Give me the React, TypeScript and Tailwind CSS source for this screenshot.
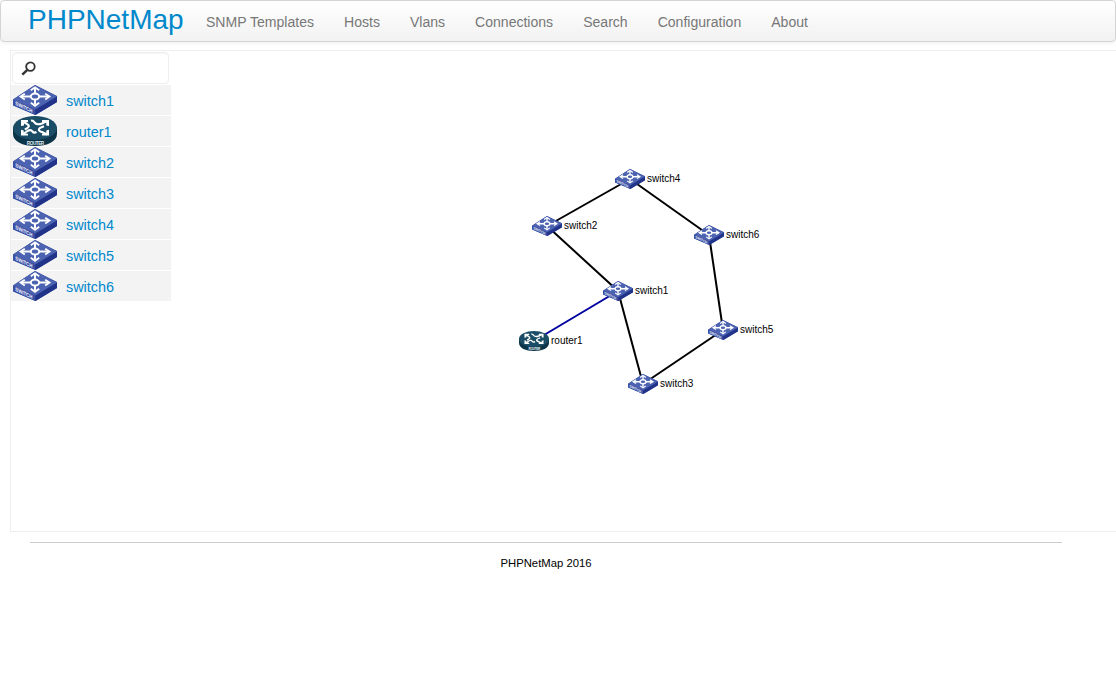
import React from "react";

type Kind = "switch" | "router";

function SwitchIcon({ className }: { className: string }) {
  return (
    <svg className={className} viewBox="0 0 44 30" preserveAspectRatio="none" aria-hidden="true">
      <path d="M0 14.5 22 0 44 11V17L22.5 30 0 20Z" fill="#293c94" />
      <path d="M0 14.5 22.3 24.5V30L0 20.4Z" fill="#3b4fa3" />
      <path d="M22.3 24.5 44 11.6V17L22.3 30Z" fill="#22338a" />
      <path d="M0 14.5 22 0 44 11.4 22.3 24.5Z" fill="#4c63b1" />
      <g stroke="#fff" fill="none">
        <ellipse cx="22" cy="11.600" rx="4.200" ry="3" strokeWidth="2" />
        <path d="M22 8.500V3M22 14.600V19.500M17.700 11.600H8.500M26.300 11.600H35.500" strokeWidth="2" />
        <path d="M17.800 5.200 22 2.300 26.200 5.200M17.800 17.800 22 20.800 26.200 17.800M11.800 8.800 7.500 11.600 11.800 14.400M32.200 8.800 36.500 11.600 32.200 14.400" strokeWidth="1.800" />
      </g>
      <text transform="matrix(1 .48 0 1 2.300 19.800)" fontFamily="Liberation Sans, sans-serif" fontSize="5.400" fontWeight="bold" fill="#f3f5fc" textLength="17" lengthAdjust="spacingAndGlyphs">SWITCH</text>
    </svg>
  );
}

function RouterIcon({ className }: { className: string }) {
  return (
    <svg className={className} viewBox="0 0 44 30" preserveAspectRatio="none" aria-hidden="true">
      <path d="M0 11.500V18C0 25.500 9.500 30 22 30S44 25.500 44 18V11.500Z" fill="#0c3448" />
      <ellipse cx="22" cy="12" rx="22" ry="12" fill="#1b4d66" />
      <g stroke="#fff" strokeWidth="2.100" fill="none">
        <path d="M10 5.500 14 8Q18.500 10.500 11.800 13.500" />
        <path d="M9.500 18.500 13 16Q17.500 12.500 19.500 15.500 21 17.500 23.500 16" />
        <path d="M18 4.800Q20 4.200 21.500 6.500 24 9.500 29 7.500L34 5" />
        <path d="M34 18.500 29.500 16.300Q21.500 13.500 31 10.300" />
      </g>
      <path d="M8 4H15V6L11 6.500V9.500L8 10ZM36 4V10L33.300 9.500V6.500L29 6V4ZM8 19.500V13.800L10.700 14.500V17.300L15 17.800V19.500ZM36 19.500H29V17.800L33.300 17.300V14.500L36 13.800Z" fill="#fff" />
      <text x="13.800" y="28.600" fontFamily="Liberation Sans, sans-serif" fontSize="4.600" fontWeight="bold" fill="#e4eef3" textLength="17.400" lengthAdjust="spacing">ROUTER</text>
    </svg>
  );
}

function DeviceIcon({ kind, className }: { kind: Kind; className: string }) {
  return kind === "router" ? <RouterIcon className={className} /> : <SwitchIcon className={className} />;
}

const menu = ["SNMP Templates", "Hosts", "Vlans", "Connections", "Search", "Configuration", "About"];

const hosts: { name: string; kind: Kind; x: number; y: number }[] = [
  { name: "switch1", kind: "switch", x: 607, y: 240 },
  { name: "router1", kind: "router", x: 523, y: 290 },
  { name: "switch2", kind: "switch", x: 536, y: 175 },
  { name: "switch3", kind: "switch", x: 632, y: 333 },
  { name: "switch4", kind: "switch", x: 619, y: 128 },
  { name: "switch5", kind: "switch", x: 712, y: 279 },
  { name: "switch6", kind: "switch", x: 698, y: 184 },
];

const links: [number, number, string][] = [
  [0, 1, "#0000a0"],
  [0, 2, "#000"],
  [0, 3, "#000"],
  [2, 4, "#000"],
  [4, 6, "#000"],
  [6, 5, "#000"],
  [5, 3, "#000"],
];

export default function App() {
  return (
    <div className="flex min-h-screen flex-col bg-white font-['Liberation_Sans',Arial,sans-serif] text-[#333]">
      <nav className="flex h-[42px] shrink-0 rounded border border-[#d4d4d4] bg-linear-to-b from-white to-[#f2f2f2] pl-[27px] shadow-[0_1px_4px_rgba(0,0,0,0.065)]">
        <a className="mr-[7px] w-[156px] pt-[5px] text-[28px] leading-[28px] text-[#0088cc]">PHPNetMap</a>
        <ul className="flex text-[14.060px] leading-5 text-[#777]">
          {menu.map((item) => (
            <li key={item} className="px-[15px] pt-[11px]">{item}</li>
          ))}
        </ul>
      </nav>

      <main className="relative mt-2 ml-[10px] h-[482px] shrink-0 overflow-hidden border border-r-0 border-[#eee]">
        <aside className="w-[160px]">
          <div className="mt-px ml-px flex h-8 w-[157px] items-center rounded border border-[#eee] bg-white pl-[8px] shadow-[inset_0_1px_1px_rgba(0,0,0,0.04)]">
            <svg className="size-[15px]" viewBox="0 0 14 14" fill="none" stroke="#333">
              <circle cx="8.800" cy="5.200" r="4" strokeWidth="1.700" />
              <path d="M5.900 8.300 1.200 12.800" strokeWidth="2.300" />
            </svg>
          </div>
          <ul>
            {hosts.map((host) => (
              <li key={host.name} className="flex h-[31px] items-center border-t border-white bg-[#f3f3f3] pl-[2px]">
                <DeviceIcon kind={host.kind} className="h-[30px] w-[44px]" />
                <a className="ml-[9px] pt-px text-[14.400px] leading-5 text-[#0088cc]">{host.name}</a>
              </li>
            ))}
          </ul>
        </aside>

        <div className="absolute inset-0">
          <svg className="size-full" aria-hidden="true">
            {links.map(([from, to, color]) => (
              <line key={`${from}-${to}`} x1={hosts[from].x} y1={hosts[from].y} x2={hosts[to].x} y2={hosts[to].y} stroke={color} strokeWidth="2" />
            ))}
          </svg>
          {hosts.map((host) => (
            <div key={host.name} className="absolute flex -translate-x-[15px] -translate-y-[10px] items-center" style={{ left: host.x, top: host.y }}>
              <DeviceIcon kind={host.kind} className="h-[20px] w-[30px]" />
              <span className="ml-[2px] text-[10px] leading-[20px] text-black">{host.name}</span>
            </div>
          ))}
        </div>
      </main>

      <footer className="mt-[10px] mr-[54px] ml-[30px] border-t border-[#ccc] pt-[10px] text-center text-[11.300px] leading-5 text-black">
        PHPNetMap 2016
      </footer>
    </div>
  );
}
